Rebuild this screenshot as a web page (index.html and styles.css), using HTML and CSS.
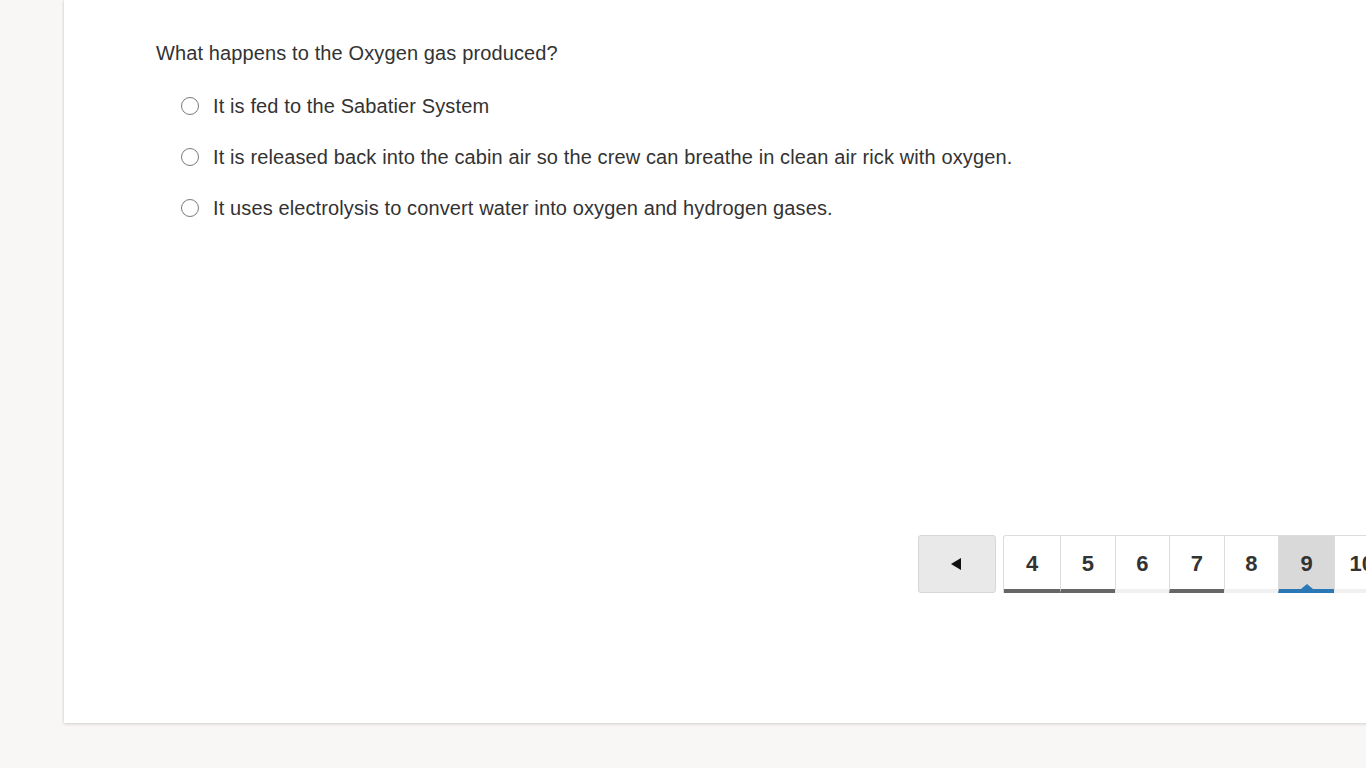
FILE: index.html
```html
<!DOCTYPE html>
<html lang="en">
<head>
<meta charset="utf-8">
<title>Question 9</title>
<link rel="stylesheet" href="styles.css">
</head>
<body>
<div class="card">
  <div class="content">
    <p class="question">What happens to the Oxygen gas produced?</p>
    <ul class="options">
      <li class="option"><span class="radio"></span><span class="label">It is fed to the Sabatier System</span></li>
      <li class="option"><span class="radio"></span><span class="label">It is released back into the cabin air so the crew can breathe in clean air rick with oxygen.</span></li>
      <li class="option"><span class="radio"></span><span class="label">It uses electrolysis to convert water into oxygen and hydrogen gases.</span></li>
    </ul>
    <nav class="pager">
      <button class="prev"><span class="tri"></span></button>
      <div class="pages">
        <span class="page done">4</span>
        <span class="page done">5</span>
        <span class="page">6</span>
        <span class="page done">7</span>
        <span class="page">8</span>
        <span class="page current">9</span>
        <span class="page">10</span>
        <span class="page">11</span>
      </div>
    </nav>
  </div>
</div>
</body>
</html>
```
FILE: styles.css
```css
html, body {
  margin: 0;
  padding: 0;
}
body {
  background: #f8f7f5;
  overflow: hidden;
  width: 1366px;
  height: 768px;
  font-family: "Liberation Sans", Arial, sans-serif;
  color: #333;
}
.card {
  margin-left: 64px;
  width: 1500px;
  height: 723px;
  background: #fff;
  box-shadow: 0 1px 3px rgba(0, 0, 0, 0.16), -1px 0 2px rgba(0, 0, 0, 0.03);
}
.content {
  padding: 41px 0 0 92px;
}
.question {
  margin: 0;
  font-size: 20px;
  letter-spacing: 0.12px;
  line-height: 24px;
}
.options {
  list-style: none;
  margin: 29px 0 0 25px;
  padding: 0;
  display: flex;
  flex-direction: column;
  gap: 27px;
}
.option {
  display: flex;
  align-items: center;
  height: 24px;
  font-size: 20px;
  letter-spacing: 0.12px;
  line-height: 24px;
}
.radio {
  border: 1.5px solid #7a7a7a;
  border-radius: 50%;
  box-sizing: border-box;
  width: 18px;
  height: 18px;
  margin-right: 14px;
  flex: none;
}
.pager {
  display: flex;
  align-items: stretch;
  gap: 7px;
  margin: 315px 0 0 762px;
  height: 58px;
}
.prev {
  width: 78px;
  height: 58px;
  background: #e9e9e9;
  border: 1px solid #d6d6d6;
  border-radius: 3px;
  display: flex;
  align-items: center;
  justify-content: center;
  padding: 0;
}
.tri {
  width: 0;
  height: 0;
  border-top: 6px solid transparent;
  border-bottom: 6px solid transparent;
  border-right: 10px solid #111;
  margin-left: -2px;
}
.pages {
  display: flex;
  border: 1px solid #dcdcdc;
  border-bottom: none;
  border-radius: 3px 0 0 0;
  height: 58px;
  box-sizing: border-box;
}
.page {
  position: relative;
  width: 54.5px;
  box-sizing: border-box;
  border-left: 1px solid #dcdcdc;
  border-bottom: 4px solid #f0f0f0;
  display: flex;
  align-items: center;
  justify-content: center;
  font-size: 22px;
  font-weight: bold;
  color: #333;
  padding-top: 3px;
  flex: none;
}
.page:first-child {
  border-left: none;
  width: 56px;
}
.page.current {
  width: 56px;
}
.page.done {
  border-bottom-color: #666;
}
.page.current {
  background: #d9d9d9;
  border-bottom-color: #2b78b5;
}
.page.current::after {
  content: "";
  position: absolute;
  left: 50%;
  bottom: 0;
  margin-left: -6px;
  border-left: 6px solid transparent;
  border-right: 6px solid transparent;
  border-bottom: 5px solid #2b78b5;
}
```
